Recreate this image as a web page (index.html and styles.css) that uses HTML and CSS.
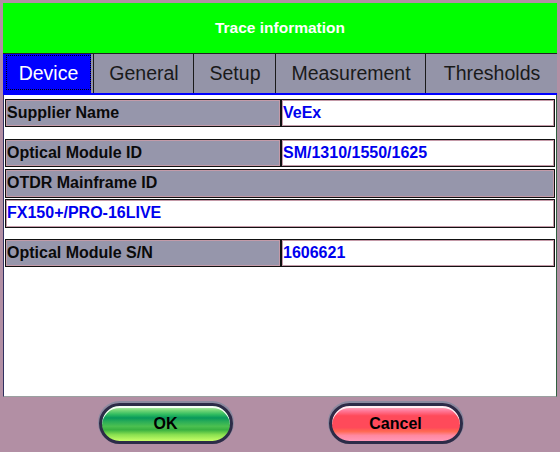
FILE: index.html
```html
<!DOCTYPE html>
<html>
<head>
<meta charset="utf-8">
<link rel="stylesheet" href="styles.css">
</head>
<body>
<div class="app">
  <div class="header">Trace information</div>
  <div class="tabs">
    <div class="tab tab-device active"><span class="tab-inner">Device</span></div>
    <div class="tab tab-general"><span class="tab-inner">General</span></div>
    <div class="tab tab-setup"><span class="tab-inner">Setup</span></div>
    <div class="tab tab-meas"><span class="tab-inner">Measurement</span></div>
    <div class="tab tab-thr"><span class="tab-inner">Thresholds</span></div>
  </div>
  <div class="panel">
    <div class="row pair first">
      <div class="box label">Supplier Name</div>
      <div class="box value">VeEx</div>
    </div>
    <div class="row pair">
      <div class="box label">Optical Module ID</div>
      <div class="box value">SM/1310/1550/1625</div>
    </div>
    <div class="row stack">
      <div class="box label tall">OTDR Mainframe ID</div>
      <div class="box value tall">FX150+/PRO-16LIVE</div>
    </div>
    <div class="row pair">
      <div class="box label">Optical Module S/N</div>
      <div class="box value">1606621</div>
    </div>
  </div>
  <div class="footer">
    <div class="btn btn-ok">OK</div>
    <div class="btn btn-cancel">Cancel</div>
  </div>
</div>
</body>
</html>
```
FILE: styles.css
```css
* { box-sizing: border-box; }
html, body {
  margin: 0;
  padding: 0;
  background: #b28fa4;
  font-family: "Liberation Sans", Arial, sans-serif;
}
.app {
  width: 560px;
  height: 452px;
  padding: 3px 3px 0 3px;
  display: flex;
  flex-direction: column;
}
.header {
  height: 50px;
  background: #00ff00;
  color: #ffffff;
  font-weight: bold;
  font-size: 15.5px;
  display: flex;
  align-items: center;
  justify-content: center;
  padding-bottom: 1px;
}
.tabs {
  height: 42px;
  display: flex;
  background: #9494a8;
  border-top: 1px solid #222;
  border-bottom: 2px solid #0000ff;
}
.tab {
  display: flex;
  border-right: 1px solid #1a1a1a;
  font-size: 19.5px;
  color: #1a1a1a;
}
.tab:last-child { border-right: none; }
.tab-device { width: 91px; }
.tab-general { width: 100px; }
.tab-setup { width: 82px; }
.tab-meas { width: 150px; }
.tab-thr { width: 131px; }
.tab-inner {
  flex: 1;
  display: flex;
  align-items: center;
  justify-content: center;
  margin: 1px 2px 3px 3px;
  border: 1px dotted transparent;
  padding-top: 1px;
}
.tab.active {
  background: #0000ff;
  color: #ffffff;
  box-shadow: inset -2px 0 0 #9494a8;
}
.tab.active .tab-inner { border-color: #000; }
.panel {
  height: 302px;
  background: #ffffff;
  border-left: 1px solid #303060;
  border-right: 1px solid #306040;
  border-bottom: 1px solid #9aa0a0;
  padding: 4px 1px 0 1px;
  display: flex;
  flex-direction: column;
}
.row.pair {
  display: grid;
  grid-template-columns: 276px 1fr;
  gap: 0;
  margin-top: 12px;
}
.row.first { margin-top: 0; }
.row.stack {
  display: flex;
  flex-direction: column;
  gap: 1px;
  margin-top: 2px;
}
.row.stack + .row.pair { margin-top: 11px; }
.box {
  height: 28px;
  border: 1px solid #111;
  box-shadow: inset 0 0 0 1px #c49aa8;
  display: flex;
  align-items: center;
  padding-left: 1px;
  font-weight: bold;
  font-size: 16px;
  padding-bottom: 1px;
}
.box.tall { height: 29px; }
.label {
  background: #9696ab;
  color: #0a0a0a;
}
.value {
  background: #ffffff;
  color: #0000ee;
}
.footer {
  flex: 1;
  display: flex;
  justify-content: center;
  align-items: flex-start;
  padding-top: 6px;
  gap: 96px;
  padding-left: 1px;
}
.btn {
  width: 134px;
  height: 41px;
  border-radius: 21px;
  border: 3px solid #2c2c48;
  box-shadow: 0 -1px 0 1px #8a8aa0, inset 0 2px 0 #f4fff4;
  display: flex;
  align-items: center;
  justify-content: center;
  font-weight: bold;
  font-size: 16px;
  color: #000;
}
.btn-ok {
  background: linear-gradient(to bottom,
    #c8f4c0 0%, #78d878 12%, #30bc60 24%, #08985a 34%,
    #28ac58 44%, #4cc050 58%, #38b040 68%, #8ae050 82%, #c8ff68 100%);
}
.btn-cancel {
  box-shadow: 0 -1px 0 1px #8a8aa0, inset 0 2px 0 #fff0f4;
  background: linear-gradient(to bottom,
    #ffb8c8 0%, #ff7898 14%, #ff4a5a 28%, #ff4a5a 62%,
    #ff6850 72%, #ff88a0 84%, #ff98b8 100%);
}
```
